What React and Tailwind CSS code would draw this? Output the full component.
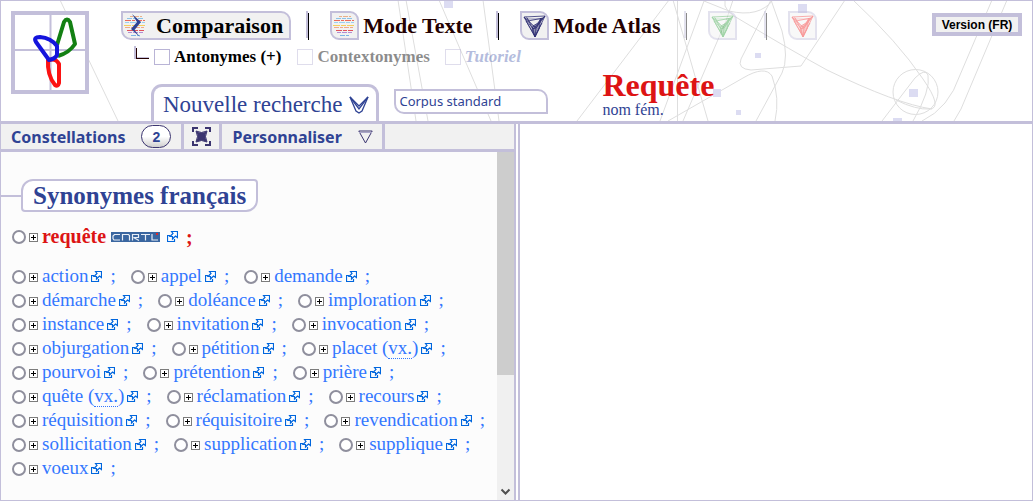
import React, { useState } from 'react';

const SERIF = "font-['Liberation_Serif','Times_New_Roman',serif]";
const SANS = "font-['Noto_Sans','Open_Sans',sans-serif]";

const SYNONYMS = [
  { word: 'action' },
  { word: 'appel' },
  { word: 'demande' },
  { word: 'démarche' },
  { word: 'doléance' },
  { word: 'imploration' },
  { word: 'instance' },
  { word: 'invitation' },
  { word: 'invocation' },
  { word: 'objurgation' },
  { word: 'pétition' },
  { word: 'placet', note: 'vx.' },
  { word: 'pourvoi' },
  { word: 'prétention' },
  { word: 'prière' },
  { word: 'quête', note: 'vx.' },
  { word: 'réclamation' },
  { word: 'recours' },
  { word: 'réquisition' },
  { word: 'réquisitoire' },
  { word: 'revendication' },
  { word: 'sollicitation' },
  { word: 'supplication' },
  { word: 'supplique' },
  { word: 'voeux' },
];

const App = () => {
  return (
    <div className={`flex h-screen flex-col overflow-hidden border border-[#c3bfda] bg-white text-black ${SERIF}`}>
      <Header />
      <div className="flex min-h-0 flex-1">
        <SidePanel />
        <main className="flex-1 border-l-2 border-[#c3bfda] bg-white" />
      </div>
    </div>
  );
};

const Header = () => (
  <header className="relative flex items-start overflow-hidden border-b-3 border-[#c3bfda] bg-white pl-2.5">
    <HeaderBackground />
    <a href="#accueil" aria-label="Accueil" className="relative mt-2.5 shrink-0">
      <Logo />
    </a>

    <div className="relative flex h-[120px] min-w-0 flex-1 flex-col pt-2.5 pl-8">
      <div className="flex items-start justify-between">
        <nav className="flex h-[29px] items-center whitespace-nowrap text-[22px] font-bold text-[#240000]">
          <button className="flex h-[29px] items-center gap-2 rounded-tr-[10px] rounded-bl-[10px] border-2 border-[#c3bfda] bg-[#f1f1f1] pr-1.5 text-black">
            <WordCloudIcon arrow />
            Comparaison
          </button>
          <Separator className="mr-[21px] ml-[15px]" />
          <button className="flex items-center gap-1">
            <IconTile>
              <WordCloudIcon />
            </IconTile>
            Mode Texte
          </button>
          <Separator className="mr-[21px] ml-[23px]" />
          <button className="flex items-center gap-[5px]">
            <IconTile>
              <AtlasIcon color="#2f2f73" />
            </IconTile>
            Mode Atlas
          </button>
          <Separator className="mr-[21px] ml-6 opacity-45" />
          <button aria-label="Atlas vert" className="opacity-45">
            <IconTile>
              <AtlasIcon color="#2fa03c" />
            </IconTile>
          </button>
          <Separator className="mr-[21px] ml-[27px] opacity-45" />
          <button aria-label="Atlas rouge" className="opacity-45">
            <IconTile>
              <AtlasIcon color="#f02020" />
            </IconTile>
          </button>
        </nav>
        <button className="mt-0.5 mr-2.5 h-[23px] w-[90px] border-4 border-[#c3bfda] bg-[#f1f1f1] font-['Liberation_Sans',Arial,sans-serif] text-[12px] leading-none font-bold whitespace-nowrap">
          Version (FR)
        </button>
      </div>

      <div className="flex h-[34px] shrink-0 items-center pl-3 text-[17px] font-bold whitespace-nowrap">
        <svg width="18" height="16" viewBox="0 0 18 16" className="mr-[3px] mb-2.5 shrink-0" shapeRendering="crispEdges">
          <path d="M1 2h2v11h13v2H1z" fill="#c3bfda" />
          <path d="M3 4v10M3 14.5h13" stroke="#240000" fill="none" />
        </svg>
        <OptionBox label="Antonymes (+)" />
        <OptionBox label="Contextonymes" disabled className="ml-4" textClass="text-black" />
        <OptionBox label="Tutoriel" disabled className="ml-[15px]" textClass="text-[#5b6db5] italic" />
      </div>

      <div className="flex min-h-0 flex-1 items-end pl-[30px]">
        <button className="flex h-[37px] items-center gap-[7px] rounded-t-[11px] border-3 border-b-0 border-[#c3bfda] bg-white pt-0.5 pr-[7px] pl-[9px] text-[23px] whitespace-nowrap text-[#2f4394]">
          Nouvelle recherche
          <svg width="20" height="18" viewBox="0 0 20 18" fill="none" stroke="#2f4394" strokeWidth="1.3">
            <path d="M1 1l9 9 9-9-6 14-3 2-3-2z" />
            <path d="M1 1l9 12 9-12" />
          </svg>
        </button>
        <select
          aria-label="Corpus"
          className={`mb-[7px] ml-[15px] h-[25px] w-[154px] appearance-none rounded-tr-[10px] rounded-bl-[10px] border-2 border-[#c3bfda] bg-white px-[3px] text-[13px] leading-none text-[#2f4394] ${SANS}`}
        >
          <option>Corpus standard</option>
        </select>
        <div className="mb-[3px] ml-[54px]">
          <h1 className="text-[32px] leading-[34px] font-bold text-[#dd1414]">Requête</h1>
          <p className="text-[16px] leading-4 text-[#2f4394]">nom fém.</p>
        </div>
      </div>
    </div>
  </header>
);

const Separator = ({ className }) => (
  <span className={`flex h-[29px] w-[3px] ${className}`}>
    <span className="mb-0.5 w-0.5 bg-[#c3bfda]" />
    <span className="mt-0.5 w-px bg-black" />
  </span>
);

const IconTile = ({ children }) => (
  <span className="flex h-[29px] w-[29px] items-center justify-center rounded-tr-[9px] rounded-bl-[9px] border-2 border-[#c3bfda] bg-[#f1f1f1]">
    {children}
  </span>
);

const OptionBox = ({ label, disabled, className = '', textClass = '' }) => (
  <label className={`flex items-center gap-1 ${disabled ? 'opacity-45' : ''} ${className}`}>
    <input
      type="checkbox"
      disabled={disabled}
      className="h-4 w-4 shrink-0 appearance-none border border-[#b9b4d6] bg-white checked:bg-[#2f4394]"
    />
    <span className={textClass}>{label}</span>
  </label>
);

const SidePanel = () => {
  const [selected, setSelected] = useState(null);

  return (
    <aside className="mr-0.5 flex w-[49.95%] flex-col border-r-2 border-[#c3bfda] bg-[#fcfcfc]">
      <div className={`flex h-[28px] shrink-0 items-stretch border-b-3 border-[#c3bfda] bg-[#f1f1f1] text-[16px] leading-none font-bold text-[#2f4394] ${SANS}`}>
        <button className="flex items-center gap-4 border-r-3 border-[#c3bfda] pr-2.5 pl-2.5">
          Constellations
          <span className="flex h-[23px] w-[30px] items-center justify-center rounded-full border border-[#3b3570] bg-linear-to-b from-white from-50% to-[#cfcfcf] font-['Liberation_Sans',Arial,sans-serif] text-[14px]">
            2
          </span>
        </button>
        <button aria-label="Plein écran" className="flex items-center border-r-3 border-[#c3bfda] px-2">
          <FullscreenIcon />
        </button>
        <button className="flex items-center gap-4 border-r-3 border-[#c3bfda] pr-[9px] pl-2.5">
          Personnaliser
          <svg width="15" height="14" viewBox="0 0 15 14" fill="none" stroke="#3b3570">
            <path d="M.8 1h13.4L7.5 13z" />
            <path d="M1 2.5h13" stroke="#aaa6c8" />
          </svg>
        </button>
      </div>

      <div className="flex min-h-0 flex-1">
        <section className="min-w-0 flex-1 overflow-hidden pt-[27px]">
          <div className="flex items-center">
            <span className="h-0.5 w-5 bg-[#c3bfda]" />
            <h2 className="rounded-tl-[12px] rounded-tr-[4px] rounded-br-[12px] rounded-bl-[4px] border-2 border-[#c3bfda] bg-white px-2.5 text-[25px] leading-[29px] font-bold whitespace-nowrap text-[#2f4394]">
              Synonymes français
            </h2>
          </div>

          <div className="mt-[13px] flex h-6 items-center pl-[11px] text-[20px] font-bold text-[#dd1414]">
            <WordControls word="requête" selected={selected} onSelect={setSelected} />
            <span className="pb-0.5">requête</span>
            <CnrtlBadge />
            <a href="#requete" aria-label="Ouvrir requête" className="ml-[7px] pb-0.5">
              <ExternalIcon />
            </a>
            <span className="ml-2">;</span>
          </div>

          {/* The negative margin absorbs the gap that trails the last word of a row */}
          <ul className="mt-4 -mr-[15px] flex flex-wrap pl-[11px] text-[19px] leading-[22px] text-[#3377ff]">
            {SYNONYMS.map((item) => (
              <SynonymItem key={item.word} item={item} selected={selected} onSelect={setSelected} />
            ))}
          </ul>
        </section>
        <Scrollbar />
      </div>
    </aside>
  );
};

const WordControls = ({ word, selected, onSelect }) => (
  <>
    <input
      type="radio"
      name="synonyme"
      aria-label={word}
      checked={selected === word}
      onChange={() => onSelect(word)}
      className="h-3.5 w-3.5 shrink-0 appearance-none rounded-full border-2 border-[#8f8f9d] bg-white checked:bg-[#2f4394]"
    />
    <button aria-label={`Développer ${word}`} className="mr-1 ml-[3px] shrink-0">
      <svg width="9" height="9" viewBox="0 0 9 9" shapeRendering="crispEdges" className="block">
        <rect x=".5" y=".5" width="8" height="8" fill="#fff" stroke="#7c7c7c" />
        <path d="M2 4.5h5M4.5 2v5" stroke="#000" />
      </svg>
    </button>
  </>
);

const SynonymItem = ({ item, selected, onSelect }) => (
  <li className="mr-[15px] flex h-6 items-center whitespace-nowrap">
    <WordControls word={item.word} selected={selected} onSelect={onSelect} />
    <a href={`#${item.word}`} className="flex items-center gap-[3px] pb-0.5">
      <span>
        {item.word}
        {item.note && (
          <>
            {' ('}
            <abbr className="border-b border-dotted border-[#3377ff] leading-none no-underline">{item.note}</abbr>)
          </>
        )}
      </span>
      <ExternalIcon />
    </a>
    <span className="ml-2 pb-0.5">;</span>
  </li>
);

const Scrollbar = () => (
  <div className="flex w-[17px] flex-col justify-between bg-[#f0f0f0]" aria-hidden="true">
    <div className="h-[64%] bg-[#cdcdcd]" />
    <svg width="17" height="17" viewBox="0 0 17 17" fill="none" stroke="#505050" strokeWidth="2">
      <path d="M4.5 6.5l4 4 4-4" />
    </svg>
  </div>
);

const ExternalIcon = () => (
  <svg width="11" height="11" viewBox="0 0 11 11" fill="none" stroke="#0066dd" className="shrink-0">
    <path d="M3 4.5H.5V10.500H7.500V8" strokeWidth="1.2" />
    <path d="M4.500 .500H10.500V6.500L8.500 5 5.500 8V5.500H3L6 2.500z" fill="#fff" strokeWidth="1.2" />
  </svg>
);

const CnrtlBadge = () => (
  <svg width="49" height="10" viewBox="0 0 49 10" className="ml-[5px] shrink-0" role="img" aria-label="CNRTL">
    <rect width="49" height="10" fill="#3a66a0" />
    <g fill="none" stroke="#e8eef6" strokeWidth="1.2">
      <path d="M9 2.500H3.500L2 4v2.500l1 1.500h6M11.500 8.500v-6h6l1 1v5M21.500 8.500v-6h6V5.500h-5l5.500 3M30 2.500h9M34.500 2.500v6M41 2v6h6" />
    </g>
    <rect x="45" y="1" width="2" height="2" fill="#e02828" />
  </svg>
);

const FullscreenIcon = () => (
  <svg width="19" height="19" viewBox="0 0 19 19" fill="none" stroke="#3b3570" strokeWidth="2">
    <path d="M1 5V1h5M13 1h5v4M18 14v4h-5M6 18H1v-4" />
    <path d="M4 4q5.500 3 11 0-3 5.500 0 11-5.500-3-11 0 3-5.500 0-11z" fill="#3b3570" strokeWidth="1" />
  </svg>
);

const Logo = () => (
  <svg width="78" height="83" viewBox="0 0 78 83" className="block">
    <rect x="2" y="2" width="74" height="79" fill="#fff" stroke="#c3bfda" strokeWidth="4" />
    <path d="M39.500 4v75M4 39h70" stroke="#c3bfda" strokeWidth="2" />
    <g fill="none" strokeWidth="4" strokeLinejoin="round">
      <path d="M46 34L53 11q3-5 6 0l5 22q-6 9-17 12" stroke="#138013" />
      <path d="M38 49q7-2 10 4v19q-1 4-4 2-8-10-7-25z" stroke="#fb1212" />
      <path d="M38 49L25 31q-3-5 4-5 11 1 17 9v9q-2 4-8 5z" stroke="#1414dc" />
    </g>
  </svg>
);

// Rows of tiny coloured dashes standing for words
const CLOUD_ROWS = [
  { y: 3.5, dash: '3 1 5 1', from: 7, to: 19, color: '#e9b08a' },
  { y: 5.5, dash: '5 1 4 1', from: 4, to: 20, color: '#8cc3e6' },
  { y: 7.5, dash: '6 1 3 1', from: 2, to: 22, color: '#ea6a5c' },
  { y: 9.5, dash: '4 1 6 1', from: 2, to: 22, color: '#9ad0f0' },
  { y: 12.5, dash: '7 1 5 1', from: 1, to: 23, color: '#f5cf5e' },
  { y: 14.5, dash: '5 1 3 1', from: 2, to: 22, color: '#f0a88a' },
  { y: 17.5, dash: '6 1 4 1', from: 4, to: 21, color: '#e0505c' },
  { y: 19.5, dash: '4 1 5 1', from: 5, to: 20, color: '#b48cd2' },
  { y: 22.5, dash: '5 1 3 1', from: 8, to: 18, color: '#7cb4e6' },
];

const WordCloudIcon = ({ arrow }) => (
  <svg width="25" height="25" viewBox="0 0 25 25" fill="none" className="shrink-0">
    {CLOUD_ROWS.map((row) => (
      <path key={row.y} d={`M${row.from} ${row.y}H${row.to}`} stroke={row.color} strokeDasharray={row.dash} />
    ))}
    {arrow && <path d="M9 1l9 8-6.500 8 5.500 7-9-8 6-7z" fill="#2f4394" />}
  </svg>
);

const AtlasIcon = ({ color }) => (
  <svg width="23" height="24" viewBox="0 0 23 24" fill="none" stroke={color} strokeWidth=".8" className="shrink-0">
    <path d="M1 3l21-1-10 21zM1 3l9 12 2 8M22 2l-9 12-1 9M1 3l12 11M22 2L10 15M5 7l15-3M4 4l6 11 3-1 6-10M3 7l9 15 7-13" />
    <path d="M10 12l5-3 3-5-2 11-4 8-3-8z" fill={color} fillOpacity=".5" />
    <path d="M3 2.500l7 10 3 0 8-10M2 5h18" strokeWidth=".5" />
  </svg>
);

const HeaderBackground = () => (
  <svg width="1033" height="121" viewBox="1 1 1033 121" fill="none" stroke="#dedede" className="absolute top-0 left-0" aria-hidden="true">
    <path d="M60 0l58 121M398 0l18 121M406 0l22 121M439 0l52 121M483 0l16 121" />
    <path d="M669 0l-92 121M673 0l35 121M677.500 0v121" />
    <path d="M668 121l75-43q22-13 29-2 8 22 3 45" />
    <path d="M660 121L704 1l25 10q30 7 44-11M725 0v6q4 8 14 13 55 33 88 51 70 34 105 39" />
    <path d="M683 121l43-100 7-21M756 121l26-48q7-15 0-42L771 0l-30 59q-4 10 10 11l50-4 44-66" />
    <path d="M853 0q45 42 70 79 20 29 7 30-14 1-34-9" />
    <circle cx="915.500" cy="92" r="22.500" />
    <path d="M882 121l33-43q10-10 13-3 3 15-15 46M922 121q27-13 38-46l32-75M954 121l7-12 46-109" />
    <g fill="#dcdcf2" stroke="none">
      <path d="M444 0h9v8h-9zM798 4h9v9h-9zM755 53h6v5h-6zM713 89h8v8h-8zM736 110h5v5h-5zM909 89h9v8h-9zM893 118h9v5h-9z" />
    </g>
  </svg>
);

export default App;
